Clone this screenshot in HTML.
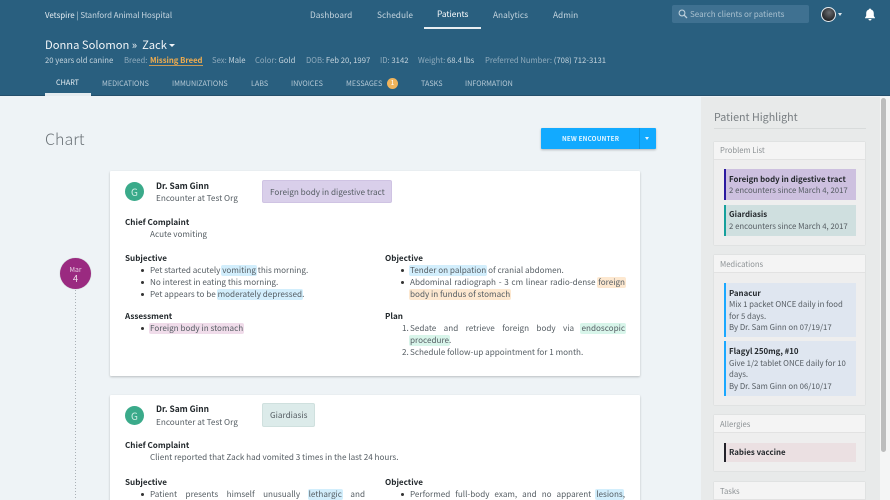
<!DOCTYPE html>
<html><head><meta charset="utf-8"><style>
html,body{margin:0;padding:0;width:890px;height:500px;overflow:hidden;background:#eef3f6}
body{position:relative;font-family:"Noto Sans CJK JP","Liberation Sans",sans-serif;font-size:8px;color:#555d63}
div,span.t{position:absolute}
.t{position:absolute;white-space:nowrap;line-height:14px;height:14px}
.nav{color:#c5d5df;font-size:8.3px}
.sub{font-size:7.7px;color:#c3d3dd}
.sub i{font-style:normal;color:#8fabbd}
.tab{font-size:7.2px;color:#b5c9d6}
.b{font-weight:700;color:#22282c;font-size:8.1px}
.p{font-size:8.15px;color:#555d63}
.j{white-space:normal;text-align:justify;text-align-last:justify}
.dot{width:3px;height:3px;border-radius:50%;background:#333}
.hb{background:#d2eefc;border-radius:2px;padding:0 1px;margin:0 -1px}
.hp{background:#f0dcea;border-radius:2px;padding:0 1px;margin:0 -1px}
.ho{background:#fde8d0;border-radius:2px;padding:0 1px;margin:0 -1px}
.hg{background:#d8f5ea;border-radius:2px;padding:0 1px;margin:0 -1px}
.card{background:#fff;box-shadow:0 1px 2px rgba(0,0,0,.22);left:110px;width:530px;border-radius:1px}
.av{background:#3aaa8a;border-radius:50%;width:19px;height:19px;left:125px;color:#cfeee4;font-size:10px;line-height:19px;text-align:center}
.pan{left:714px;width:151px;background:#eeeeee;box-shadow:0 0 1px rgba(0,0,0,.18)}
.ph{left:714px;width:151px;height:17px;background:#f4f4f4;border-bottom:1px solid #e2e2e2}
.pt{font-size:7.65px;color:#8d9295;left:720px}
.sc{left:724px;width:130px;border-left:2px solid}
.sb{font-size:7.85px;font-weight:700;color:#23282c;left:729px}
.st{font-size:7.8px;color:#555c62;left:729px}
</style></head><body>

<div style="left:0;top:0;width:890px;height:96px;background:#295f7f;border-bottom:1px solid #244f6b;box-sizing:border-box"></div>

<span class="t" style="left:45px;top:9px;font-size:7.9px;color:#c9d8e2"><span style="color:#e6eef3">Vetspire</span> | Stanford Animal Hospital</span>
<span class="t nav" style="left:310px;top:8px">Dashboard</span>
<span class="t nav" style="left:377px;top:8px">Schedule</span>
<span class="t nav" style="left:437px;top:7px;color:#fff">Patients</span>
<span class="t nav" style="left:493px;top:8px">Analytics</span>
<span class="t nav" style="left:553px;top:8px">Admin</span>
<div style="left:424px;top:27px;width:57px;height:2px;background:#e8eef2"></div>

<div style="left:672px;top:5px;width:137px;height:18px;background:#3f7191;border-radius:2px"></div>
<svg style="position:absolute;left:678px;top:9px" width="10" height="10" viewBox="0 0 10 10"><circle cx="4" cy="4" r="2.9" fill="none" stroke="#bccfdb" stroke-width="1.1"/><path d="M6.2 6.2L9 9" stroke="#bccfdb" stroke-width="1.3"/></svg>
<span class="t" style="left:690px;top:8px;font-size:8.05px;color:#a9c1d0">Search clients or patients</span>
<div style="left:821px;top:7px;width:13px;height:13px;border-radius:50%;background:radial-gradient(circle at 55% 35%,#6a6c70,#26272a 70%);border:1px solid #e8eef2"></div>
<div style="left:838px;top:13px;width:0;height:0;border:2.5px solid transparent;border-top:3px solid #dfe8ee"></div>
<svg style="position:absolute;left:864px;top:8px" width="12" height="13" viewBox="0 0 12 13"><path d="M6 0.5C6.7 .5 7 1 7 1.5 9 2 9.8 3.6 9.8 5.6V8L11 9.7V10.3H1V9.7L2.2 8V5.6C2.2 3.6 3 2 5 1.5 5 1 5.3.5 6 .5Z" fill="#fff"/><path d="M4.5 11H7.5A1.5 1.5 0 0 1 4.5 11Z" fill="#fff"/></svg>

<span class="t" style="left:45px;top:38px;font-size:11.2px;color:#f1f5f8;line-height:14px">Donna Solomon »&nbsp; Zack</span>
<div style="left:169px;top:44px;width:0;height:0;border:3px solid transparent;border-top:3px solid #f1f5f8"></div>
<span class="t sub" style="left:45px;top:54px">20 years old canine</span>
<span class="t sub" style="left:124px;top:54px"><i>Breed:</i></span>
<span class="t sub" style="left:150px;top:54px"><b style="color:#f0ac4e">Missing Breed</b></span>
<div style="left:149px;top:65px;width:54px;height:1px;background:#c89a58"></div>
<span class="t sub" style="left:212px;top:54px"><i>Sex:</i> Male</span>
<span class="t sub" style="left:255px;top:54px"><i>Color:</i> Gold</span>
<span class="t sub" style="left:306px;top:54px"><i>DOB:</i> Feb 20, 1997</span>
<span class="t sub" style="left:380px;top:54px"><i>ID:</i> 3142</span>
<span class="t sub" style="left:418px;top:54px"><i>Weight:</i> 68.4 lbs</span>
<span class="t sub" style="left:485px;top:54px"><i>Preferred Number:</i> (708) 712-3131</span>

<span class="t tab" style="left:56px;top:76px;color:#e9f0f4">CHART</span>
<span class="t tab" style="left:102px;top:77px">MEDICATIONS</span>
<span class="t tab" style="left:172px;top:77px">IMMUNIZATIONS</span>
<span class="t tab" style="left:251px;top:77px">LABS</span>
<span class="t tab" style="left:291px;top:77px">INVOICES</span>
<span class="t tab" style="left:346px;top:77px">MESSAGES</span>
<div style="left:387px;top:78px;width:11px;height:11px;border-radius:50%;background:#f0b45c;color:#fff;font-size:7px;line-height:11px;text-align:center">1</div>
<span class="t tab" style="left:421px;top:77px">TASKS</span>
<span class="t tab" style="left:465px;top:77px">INFORMATION</span>
<div style="left:45px;top:93px;width:46px;height:3px;background:#e4ebef"></div>

<span class="t" style="left:45px;top:129px;font-size:16px;line-height:18px;height:18px;color:#6d7479;font-weight:300">Chart</span>

<div style="left:541px;top:128px;width:115px;height:21px;background:#12aaff;border-radius:1px;box-shadow:0 1px 2px rgba(0,0,0,.25)"></div>
<div style="left:639px;top:128px;width:1px;height:21px;background:#0f94dd"></div>
<span class="t" style="left:562px;top:132px;font-size:6.3px;font-weight:700;color:#e6f6ff;letter-spacing:.2px">NEW ENCOUNTER</span>
<div style="left:645px;top:137px;width:0;height:0;border:2.5px solid transparent;border-top:3px solid #e6f6ff"></div>

<div style="left:75px;top:290px;width:1px;height:210px;background:repeating-linear-gradient(#aab1b6 0 1px,transparent 1px 3px)"></div>
<div style="left:60px;top:258px;width:31px;height:31px;border-radius:50%;background:#9a2a80;box-shadow:0 0 1px rgba(0,0,0,.3)"></div>
<span class="t" style="left:60px;top:262px;width:31px;text-align:center;font-size:6.8px;color:#e8cfe2">Mar</span>
<span class="t" style="left:60px;top:271px;width:31px;text-align:center;font-size:9.5px;color:#f0dfec">4</span>

<!-- Card 1 -->
<div class="card" style="top:171px;height:205px"></div>
<div class="av" style="top:182px">G</div>
<span class="t b" style="left:156px;top:179px;font-size:8.4px">Dr. Sam Ginn</span>
<span class="t p" style="left:156px;top:191px;font-size:8.2px">Encounter at Test Org</span>
<div style="left:262px;top:180px;width:128px;height:21px;background:#d9cfea;border:1px solid #cfc3e3;border-radius:2px"></div>
<span class="t p" style="left:270px;top:185px;font-size:8.2px">Foreign body in digestive tract</span>
<span class="t b" style="left:125px;top:216px">Chief Complaint</span>
<span class="t p" style="left:150px;top:228px">Acute vomiting</span>

<span class="t b" style="left:125px;top:252px">Subjective</span>
<div class="dot" style="left:141px;top:269px"></div>
<span class="t p" style="left:150px;top:264px">Pet started acutely <span class="hb">vomiting</span> this morning.</span>
<div class="dot" style="left:141px;top:281px"></div>
<span class="t p" style="left:150px;top:276px">No interest in eating this morning.</span>
<div class="dot" style="left:141px;top:293px"></div>
<span class="t p" style="left:150px;top:288px">Pet appears to be <span class="hb">moderately depressed</span>.</span>
<span class="t b" style="left:125px;top:310px">Assessment</span>
<div class="dot" style="left:141px;top:327px"></div>
<span class="t p" style="left:150px;top:322px"><span class="hp">Foreign body in stomach</span></span>

<span class="t b" style="left:385px;top:252px">Objective</span>
<div class="dot" style="left:401px;top:269px"></div>
<span class="t p" style="left:410px;top:264px"><span class="hb">Tender on palpation</span> of cranial abdomen.</span>
<div class="dot" style="left:401px;top:281px"></div>
<span class="t p j" style="left:410px;top:276px;width:215px">Abdominal radiograph - 3 cm linear radio-dense <span class="ho">foreign</span></span>
<span class="t p" style="left:410px;top:288px"><span class="ho">body in fundus of stomach</span></span>
<span class="t b" style="left:385px;top:310px">Plan</span>
<span class="t p" style="left:402px;top:322px">1.</span>
<span class="t p j" style="left:410px;top:322px;width:215px">Sedate and retrieve foreign body via <span class="hg">endoscopic</span></span>
<span class="t p" style="left:410px;top:334px"><span class="hg">procedure</span>.</span>
<span class="t p" style="left:402px;top:346px">2.</span>
<span class="t p" style="left:410px;top:346px">Schedule follow-up appointment for 1 month.</span>

<!-- Card 2 -->
<div class="card" style="top:395px;height:110px"></div>
<div class="av" style="top:406px">G</div>
<span class="t b" style="left:156px;top:402px;font-size:8.4px">Dr. Sam Ginn</span>
<span class="t p" style="left:156px;top:415px;font-size:8.2px">Encounter at Test Org</span>
<div style="left:262px;top:403px;width:51px;height:22px;background:#dcebea;border:1px solid #cfe0de;border-radius:2px"></div>
<span class="t p" style="left:270px;top:408px;font-size:8.2px">Giardiasis</span>
<span class="t b" style="left:125px;top:439px">Chief Complaint</span>
<span class="t p" style="left:150px;top:451px">Client reported that Zack had vomited 3 times in the last 24 hours.</span>
<span class="t b" style="left:125px;top:476px">Subjective</span>
<div class="dot" style="left:141px;top:493px"></div>
<span class="t p j" style="left:150px;top:488px;width:215px">Patient presents himself unusually <span class="hb">lethargic</span> and</span>
<span class="t b" style="left:385px;top:476px">Objective</span>
<div class="dot" style="left:401px;top:493px"></div>
<span class="t p j" style="left:410px;top:488px;width:215px">Performed full-body exam, and no apparent <span class="hb">lesions</span>,</span>

<!-- Sidebar -->
<div style="left:701px;top:97px;width:179px;height:403px;background:#e8eaea"></div>
<div style="left:880px;top:97px;width:10px;height:403px;background:#f4f5f5"></div>
<div style="left:881px;top:98px;width:5px;height:354px;background:#bcbdbd;border-radius:3px"></div>
<span class="t" style="left:714px;top:110px;font-size:10.7px;line-height:16px;height:16px;color:#777d81">Patient Highlight</span>
<div style="left:714px;top:128px;width:152px;height:1px;background:#d8dbdb"></div>

<div class="pan" style="top:142px;height:103px"></div><div class="ph" style="top:142px"></div>
<span class="t pt" style="top:144px">Problem List</span>
<div class="sc" style="top:169px;height:31px;background:#cdc0df;border-color:#2b1aa0"></div>
<span class="t sb" style="top:173px">Foreign body in digestive tract</span>
<span class="t st" style="top:184px">2 encounters since March 4, 2017</span>
<div class="sc" style="top:205px;height:31px;background:#cfdfdf;border-color:#16a09c"></div>
<span class="t sb" style="top:208px">Giardiasis</span>
<span class="t st" style="top:220px">2 encounters since March 4, 2017</span>

<div class="pan" style="top:255px;height:150px"></div><div class="ph" style="top:255px"></div>
<span class="t pt" style="top:258px">Medications</span>
<div class="sc" style="top:283px;height:54px;background:#dfe6f0;border-color:#1aa8ff"></div>
<span class="t sb" style="top:287px">Panacur</span>
<span class="t st" style="top:298px">Mix 1 packet ONCE daily in food</span>
<span class="t st" style="top:310px">for 5 days.</span>
<span class="t st" style="top:321px">By Dr. Sam Ginn on 07/19/17</span>
<div class="sc" style="top:341px;height:55px;background:#dfe6f0;border-color:#1aa8ff"></div>
<span class="t sb" style="top:345px">Flagyl 250mg, #10</span>
<span class="t st" style="top:357px">Give 1/2 tablet ONCE daily for 10</span>
<span class="t st" style="top:368px">days.</span>
<span class="t st" style="top:380px">By Dr. Sam Ginn on 06/10/17</span>

<div class="pan" style="top:415px;height:56px"></div><div class="ph" style="top:415px"></div>
<span class="t pt" style="top:418px">Allergies</span>
<div class="sc" style="top:443px;height:19px;background:#ebe0e2;border-color:#22222a"></div>
<span class="t sb" style="top:446px">Rabies vaccine</span>

<div class="pan" style="top:482px;height:18px"></div><div class="ph" style="top:482px"></div>
<span class="t pt" style="top:485px">Tasks</span>
</body></html>
